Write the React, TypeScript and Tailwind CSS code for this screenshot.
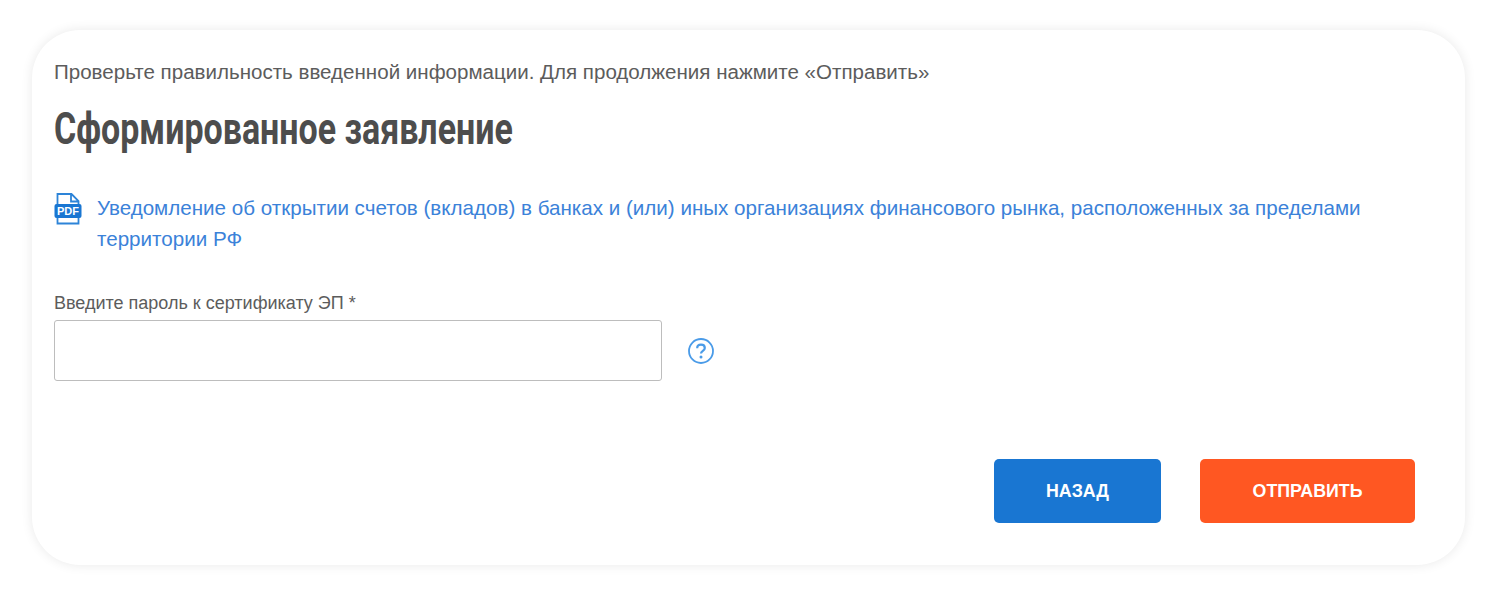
function PdfIcon() {
  return (
    <svg width="28" height="33" viewBox="0 0 28 33" fill="none" className="shrink-0">
      <path d="M3.5 12V2h14l7 7v3M3.5 26v5.500h21V26M17 2v7.500h7.500" stroke="#2d84d8" strokeWidth="1.800" />
      <rect x="0.500" y="12" width="27" height="14" rx="2" fill="#1976d2" />
      <text x="14" y="23.200" textAnchor="middle" fontSize="11" fontWeight="700" fontFamily="'Liberation Sans', sans-serif" fill="#fff">
        PDF
      </text>
    </svg>
  )
}

function HelpIcon() {
  return (
    <svg width="26" height="26" viewBox="0 0 26 26" fill="none">
      <circle cx="13" cy="13" r="12" stroke="#4a9be8" strokeWidth="1.800" />
      <path d="M9.200 10.200c0-2.200 1.700-3.500 3.800-3.500s3.800 1.300 3.800 3.200c0 2.900-3.800 2.900-3.800 5.600" stroke="#4a9be8" strokeWidth="2.200" />
      <circle cx="13" cy="18.900" r="1.500" fill="#4a9be8" />
    </svg>
  )
}

export default function App() {
  return (
    <div className="h-[597px] w-[1508px] overflow-hidden bg-white pt-[30px] pl-[32px] font-['Liberation_Sans',sans-serif]">
      <div className="flex h-[535px] w-[1433px] flex-col rounded-[48px] bg-white pt-[30px] pr-[50px] pl-[22px] shadow-[0_0_12px_rgba(0,0,0,0.09)]">
        <p className="text-[20.550px] leading-6 whitespace-nowrap text-[#5c5c5c]">
          Проверьте правильность введенной информации. Для продолжения нажмите «Отправить»
        </p>

        <h1 className="mt-[20px] origin-left scale-x-[0.755] font-['Roboto',sans-serif] text-[45px] leading-[50px] font-bold whitespace-nowrap text-[#4d4d4d]">
          Сформированное заявление
        </h1>

        {/* Document link */}
        <div className="mt-[38px] flex gap-[15px]">
          <PdfIcon />
          <a className="text-[20.600px] leading-[31px] text-[#3b82d9]">
            Уведомление об открытии счетов (вкладов) в банках и (или) иных организациях финансового рынка, расположенных за пределами территории РФ
          </a>
        </div>

        <label className="mt-[39px] block text-[18px] leading-5 text-[#5c5c5c]">Введите пароль к сертификату ЭП *</label>
        <div className="mt-[7px] flex items-center gap-[26px]">
          <input className="h-[61px] w-[608px] rounded-[3px] border border-[#bdbdbd] bg-white" />
          <HelpIcon />
        </div>

        <div className="mt-[78px] flex justify-end gap-[39px]">
          <button className="h-[64px] w-[167px] rounded-[5px] bg-[#1976d2] text-[17.800px] font-bold text-white">НАЗАД</button>
          <button className="h-[64px] w-[215px] rounded-[5px] bg-[#ff5722] text-[17.800px] font-bold text-white">ОТПРАВИТЬ</button>
        </div>
      </div>
    </div>
  )
}
